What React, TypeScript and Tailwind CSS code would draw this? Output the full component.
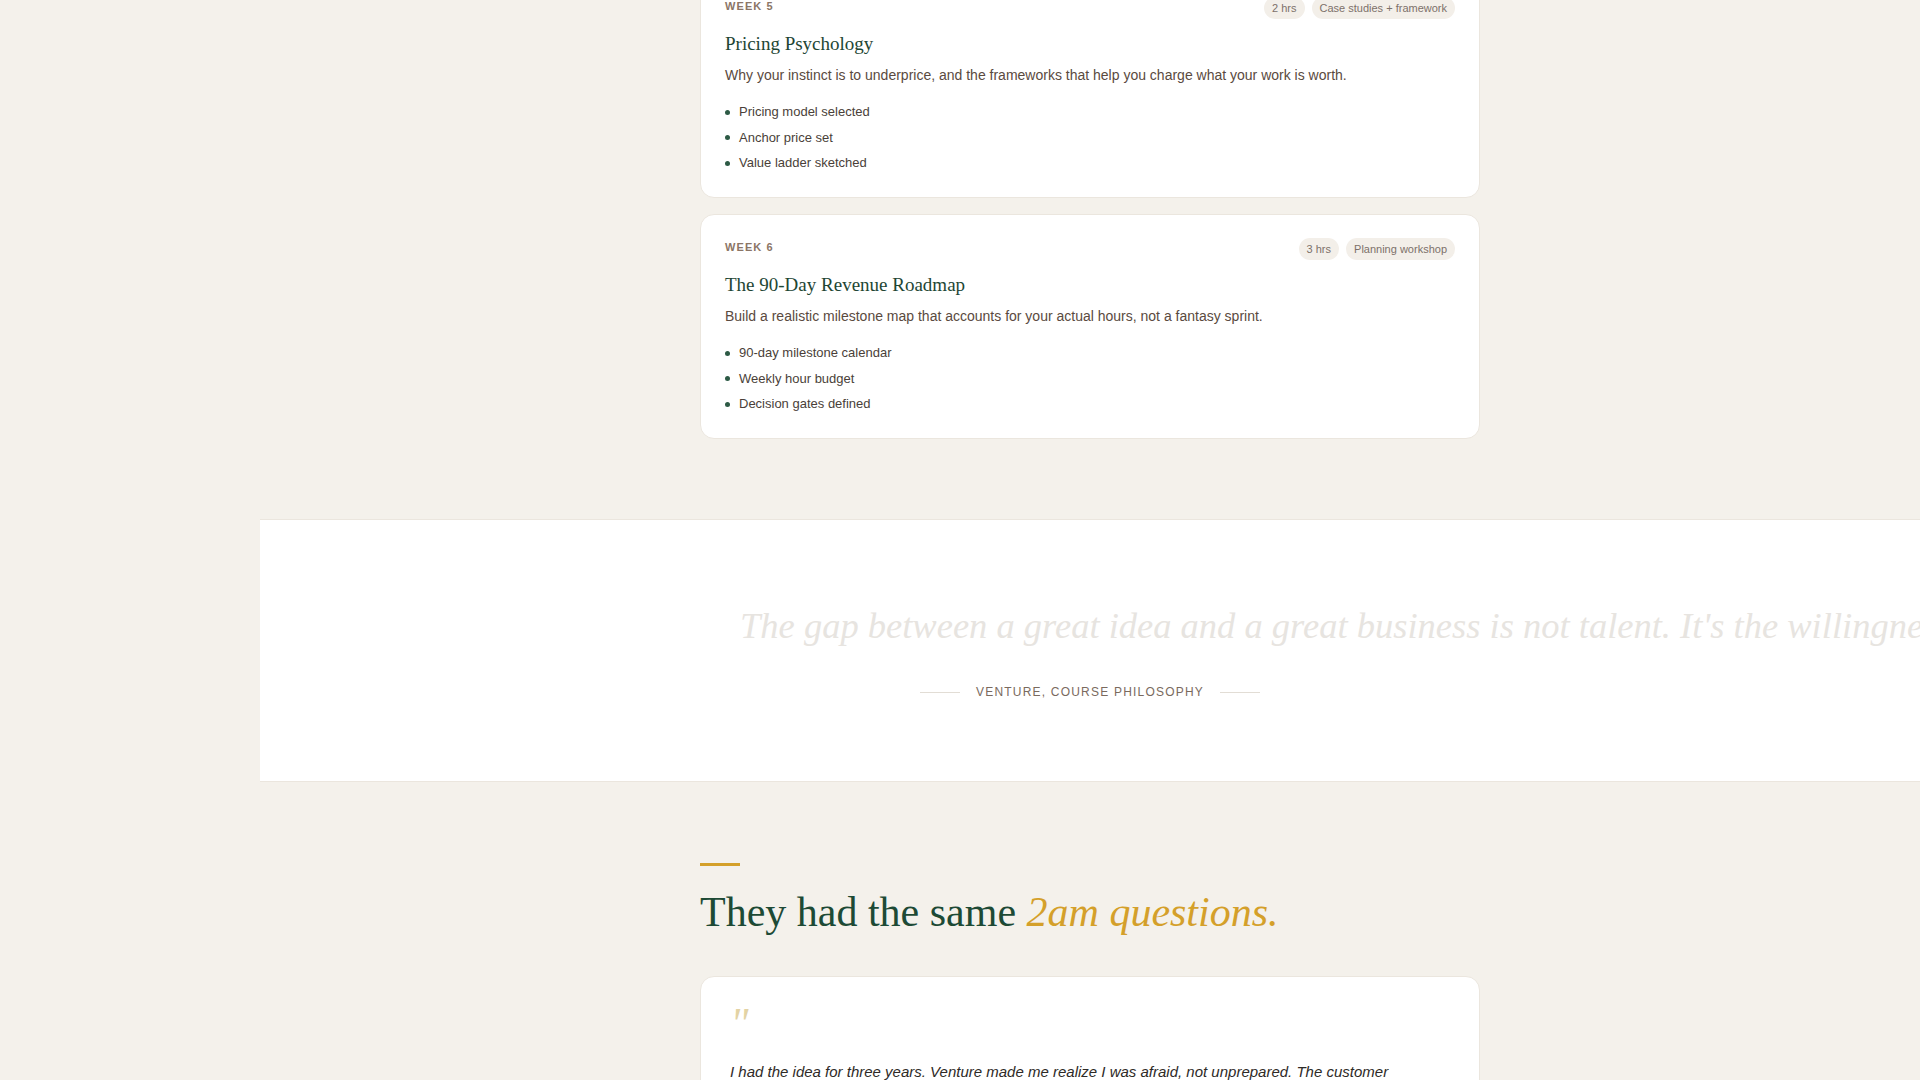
import React from 'react';

const serif = "font-['Liberation_Serif',Georgia,serif]";
const sans = "font-['Liberation_Sans',Arial,sans-serif]";

interface Week {
  week: number;
  title: string;
  blurb: string;
  hours: string;
  format: string;
  outcomes: string[];
}

const WEEKS: Week[] = [
  {
    week: 5,
    title: 'Pricing Psychology',
    blurb: 'Why your instinct is to underprice, and the frameworks that help you charge what your work is worth.',
    hours: '2 hrs',
    format: 'Case studies + framework',
    outcomes: ['Pricing model selected', 'Anchor price set', 'Value ladder sketched'],
  },
  {
    week: 6,
    title: 'The 90-Day Revenue Roadmap',
    blurb: 'Build a realistic milestone map that accounts for your actual hours, not a fantasy sprint.',
    hours: '3 hrs',
    format: 'Planning workshop',
    outcomes: ['90-day milestone calendar', 'Weekly hour budget', 'Decision gates defined'],
  },
];

const Pill: React.FC<{ children: React.ReactNode }> = ({ children }) => (
  <span className="rounded-full bg-[#f3efe9] px-2 py-1 text-[11px] leading-[14px] text-[#7d7169]">
    {children}
  </span>
);

const WeekCard: React.FC<{ w: Week }> = ({ w }) => (
  <div className="rounded-[14px] border border-[#ebe6de] bg-white p-6">
    <div className="flex items-start justify-between">
      <div className="text-[11px] font-bold uppercase leading-4 tracking-[0.1em] text-[#8b7566]">
        Week {w.week}
      </div>
      <div className="mt-[-1px] flex gap-[7px]">
        <Pill>{w.hours}</Pill>
        <Pill>{w.format}</Pill>
      </div>
    </div>
    <h3 className={`${serif} mt-3 text-[19px] leading-[25px] text-[#1e4634]`}>{w.title}</h3>
    <p className="mt-2 text-[14px] leading-[22px] text-[#5a4a40]">{w.blurb}</p>
    <ul className="mt-4 flex flex-col gap-[5.5px]">
      {w.outcomes.map((o) => (
        <li key={o} className="flex items-center gap-[9px] text-[13px] leading-5 text-[#4a3f39]">
          <span className="h-[5px] w-[5px] shrink-0 rounded-full bg-[#2d5a45]" />
          {o}
        </li>
      ))}
    </ul>
  </div>
);

export default function App() {
  return (
    <div className={`${sans} flex h-[1080px] w-full overflow-hidden bg-[#f4f1eb]`}>
      {/* left rail, empty at this scroll position */}
      <aside className="w-[260px] shrink-0" />

      <main className="flex min-w-0 flex-1 flex-col">
        {/* curriculum cards */}
        <div className="mx-auto mt-[-27px] flex w-[780px] shrink-0 flex-col gap-4">
          {WEEKS.map((w) => (
            <WeekCard key={w.week} w={w} />
          ))}
        </div>

        {/* philosophy band */}
        <section className="mt-20 flex h-[263px] shrink-0 flex-col justify-center overflow-hidden border-y border-[#ebe6de] bg-white">
          <div className="mx-auto w-[700px]">
            <p className={`${serif} whitespace-nowrap text-[36.5px] italic leading-[50px] text-[#e7e4e0]`}>
              The gap between a great idea and a great business is not talent. It's the willingness to test it before you're ready.
            </p>
          </div>
          <div className="mt-[33px] flex items-center justify-center gap-4">
            <span className="h-px w-10 bg-[#e2ddd5]" />
            <span className="text-[12px] uppercase leading-4 tracking-[0.1em] text-[#7a6a5e]">
              Venture, Course Philosophy
            </span>
            <span className="h-px w-10 bg-[#e2ddd5]" />
          </div>
        </section>

        {/* testimonials */}
        <section className="mx-auto mt-[81px] w-[780px] shrink-0">
          <div className="h-[3px] w-10 bg-[#d4a02a]" />
          <h2 className={`${serif} mt-[20px] text-[42px] leading-[52px] text-[#1d4a35]`}>
            They had the same <em className="text-[#d4a02a]">2am questions.</em>
          </h2>
          <div className="mt-[38px] rounded-[14px] border border-[#ebe6de] bg-white px-[29px] pt-[22px] pb-7">
            <div className={`${serif} h-[34px] text-[44px] italic leading-[50px] text-[#e3d3a4]`}>"</div>
            <p className="mt-[26px] text-[15px] italic leading-[26px] text-[#2e2a27]">
              I had the idea for three years. Venture made me realize I was afraid, not unprepared. The customer
              interviews in week two changed everything about what I was building.
            </p>
          </div>
        </section>
      </main>
    </div>
  );
}
